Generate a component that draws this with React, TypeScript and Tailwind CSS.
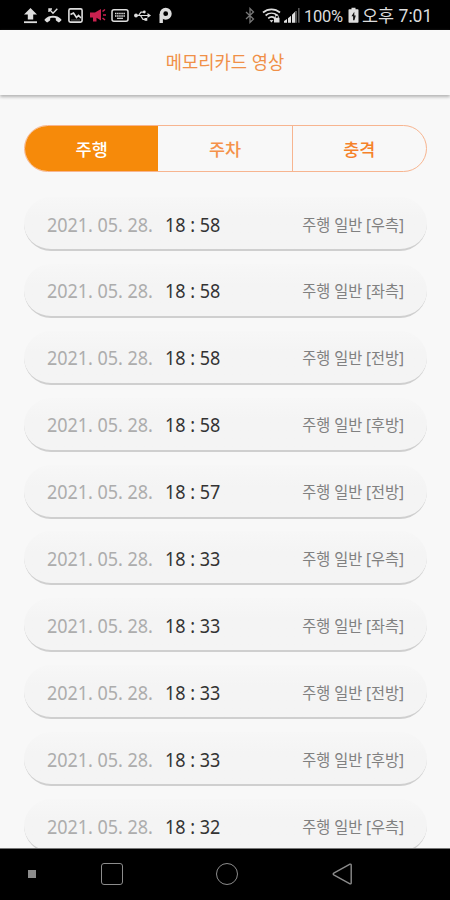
import type { ReactNode } from "react";

interface Clip {
  time: string;
  label: string;
}

const CLIPS: Clip[] = [
  { time: "18 : 58", label: "주행 일반 [우측]" },
  { time: "18 : 58", label: "주행 일반 [좌측]" },
  { time: "18 : 58", label: "주행 일반 [전방]" },
  { time: "18 : 58", label: "주행 일반 [후방]" },
  { time: "18 : 57", label: "주행 일반 [전방]" },
  { time: "18 : 33", label: "주행 일반 [우측]" },
  { time: "18 : 33", label: "주행 일반 [좌측]" },
  { time: "18 : 33", label: "주행 일반 [전방]" },
  { time: "18 : 33", label: "주행 일반 [후방]" },
  { time: "18 : 32", label: "주행 일반 [우측]" },
];

const TABS = ["주행", "주차", "충격"];

function Icon({
  width,
  className = "",
  children,
}: {
  width: number;
  className?: string;
  children: ReactNode;
}) {
  return (
    <svg
      width={width}
      height={18}
      viewBox={`0 0 ${width} 18`}
      fill="none"
      className={`flex-none text-[#dedede] ${className}`}
      aria-hidden="true"
    >
      {children}
    </svg>
  );
}

function StatusBar() {
  return (
    <div className="flex h-[30px] flex-none items-center bg-black pt-0.5 pl-6 text-[#dcdcdc]">
      {/* upload */}
      <Icon width={13}>
        <path d="M6.5 1 13 7.5H9.2V12.5H3.8V7.5H0Z" fill="currentColor" />
        <path d="M0 15.2h13" stroke="currentColor" strokeWidth="1.8" />
      </Icon>
      {/* missed call */}
      <Icon width={18} className="ml-[7px]">
        <path d="M5 5V2h3M5.3 2.3 9 6.3l4.300-4.500" stroke="currentColor" strokeWidth="1.400" />
        <path
          d="M.8 12.200C5 7.600 13 7.600 17.200 12.200c.4.500.4 1 0 1.400l-1.600 1.500c-.5.400-1 .4-1.500 0l-1.800-1.300c-.4-.3-.5-.7-.5-1.200v-1.300c-1.800-.6-3.800-.6-5.600 0v1.300c0 .5-.1.9-.5 1.200l-1.800 1.300c-.5.4-1 .4-1.500 0L.8 13.600c-.4-.4-.4-.9 0-1.400Z"
          fill="currentColor"
        />
      </Icon>
      {/* picture */}
      <Icon width={15} className="ml-1.5">
        <rect x=".9" y="1.900" width="13.200" height="13.200" rx="1.500" stroke="currentColor" strokeWidth="1.600" />
        <path d="m2.500 7.500 3-1.500 3 4.500 2-2 2.500 2.500" stroke="currentColor" strokeWidth="1.600" />
        <path d="M3 13h9" stroke="currentColor" strokeOpacity=".4" />
      </Icon>
      {/* megaphone */}
      <Icon width={17} className="ml-[7px]">
        <g className="text-[#c9214f]">
          <path d="M0 5.500h5L11 2v11.500L6.500 10.800V14.500H3V10.500H0Z" fill="currentColor" />
          <path d="m12.500 4.500 2.500-2M13 8h3M12.500 11l2.500 2" stroke="currentColor" strokeWidth="1.600" />
        </g>
      </Icon>
      {/* keyboard */}
      <Icon width={18} className="ml-1">
        <rect x="1" y="2.700" width="16" height="11.600" rx="2" stroke="currentColor" strokeWidth="1.500" />
        <path d="M4 6.500h10M4 9h10" stroke="currentColor" strokeWidth="1.400" strokeDasharray="1.500 .6" />
        <path d="M6 11.300h6" stroke="currentColor" strokeWidth="1.200" />
      </Icon>
      {/* usb */}
      <Icon width={17} className="ml-[5px]">
        <path d="M2 8.500h12M4.500 8.500 7 5.200h3M6.500 8.500l2.500 3.800h2.500" stroke="currentColor" strokeWidth="1.200" />
        <circle cx="2" cy="8.500" r="1.900" fill="currentColor" />
        <path d="M13.500 6 17 8.500 13.500 11Z" fill="currentColor" />
        <circle cx="10.300" cy="5" r="1.400" fill="currentColor" />
        <path d="M10.500 11h2.800v2.800h-2.800Z" fill="currentColor" />
      </Icon>
      {/* parking app */}
      <Icon width={13} className="ml-2">
        <path d="M2.200 16V7" stroke="currentColor" strokeWidth="3.400" />
        <circle cx="6.700" cy="6.700" r="4.200" stroke="currentColor" strokeWidth="3.600" />
      </Icon>

      {/* bluetooth */}
      <Icon width={10} className="ml-[73px]">
        <path d="m1 5 7.500 7L5 15.500V1.500L8.500 5 1 12" stroke="#777" strokeWidth="1.300" />
      </Icon>
      {/* wifi */}
      <Icon width={19} className="ml-[7px]">
        <path d="M1 5.500c5-4.300 12-4.300 17 0M3.600 8.500c3.500-3 8.300-3 11.800 0M6.200 11.300c2-1.700 4.600-1.700 6.300-.3" stroke="currentColor" strokeWidth="1.700" />
        <path d="m7.500 13.300 2 2.200 2-2.500Z" fill="currentColor" />
        <path d="M12 10.800h5.500v4.700H12Z" fill="currentColor" />
        <path d="M13.300 11V9.500a1.500 1.500 0 0 1 3 0V11" stroke="currentColor" />
      </Icon>
      {/* signal */}
      <Icon width={16} className="ml-[3px]">
        <path d="M0 15.800V14l3-2v3.800ZM4 15.800V11.300l3-2.600v7.100ZM8 15.800V7.800l3-3v11Z" fill="currentColor" />
        <path d="M12 15.800V4" stroke="#aaa" />
        <path d="M14.800 15.800V1" stroke="#555" strokeWidth="1.600" />
      </Icon>
      <span className="ml-1 w-[41px] flex-none pt-0.5 font-['Roboto',sans-serif] text-[16.500px] leading-none tracking-[-0.3px]">
        100%
      </span>
      {/* battery */}
      <Icon width={11} className="ml-[3px]">
        <path d="M3.500.8h4v1.400h2.200q.8 0 .8.8v12q0 .8-.8.8H1.300q-.8 0-.8-.8V3q0-.8.8-.8h2.200Z" fill="currentColor" />
        <path d="M6.300 4.800 3.500 9.300h1.600v3.900h1.300L7.800 8.500H6.300Z" fill="#111" />
      </Icon>
      <span className="ml-[3px] flex-none pt-0.5 font-['Roboto','Noto_Sans_CJK_KR',sans-serif] text-[17.500px] leading-none whitespace-nowrap">
        오후 7:01
      </span>
    </div>
  );
}

function Tabs() {
  return (
    <div className="mr-[23px] ml-6 mt-[30px] flex h-[47px] flex-none overflow-hidden rounded-full border border-[#f7b590]">
      {TABS.map((tab, i) => (
        <button
          key={tab}
          type="button"
          className={`flex-1 pt-px text-[17.500px] font-medium ${
            i === 0
              ? "bg-[#f68a0a] text-white"
              : i === 1
                ? "text-[#f5924a]"
                : "border-l border-l-[#f7b590] text-[#f5822a]"
          }`}
        >
          {tab}
        </button>
      ))}
    </div>
  );
}

function ClipRow({ time, label }: Clip) {
  return (
    <li className="flex h-[54px] flex-none items-center rounded-[27px] border-b-[2.500px] border-[#cfcfcf] bg-linear-to-b from-[#f7f7f7] to-[#f4f4f4] to-40% pt-1 pr-[23px] pl-[23px]">
      <span className="w-[118px] scale-y-[1.07] text-[18px] tracking-[-0.04px] text-[#adadad]">
        2021. 05. 28.
      </span>
      <span className="scale-y-[1.07] text-[18px] text-[#333]">{time}</span>
      <span className="ml-auto scale-y-[1.06] text-[15.200px] text-[#808080]">{label}</span>
    </li>
  );
}

function NavBar() {
  return (
    <nav className="flex h-[52px] flex-none items-center border-t border-[#777] bg-black pb-px pl-7 text-[#8c8c8c]">
      <span className="h-2 w-2 bg-current" />
      <span className="ml-[65px] h-[22px] w-[22px] rounded-[3px] border-[1.500px] border-current" />
      <span className="ml-[93px] h-[22px] w-[22px] rounded-full border-[1.500px] border-current" />
      <svg width="21" height="22" viewBox="0 0 21 22" fill="none" className="ml-[94px]">
        <path
          d="M18 1.200 2.200 9.800q-2 1.200 0 2.400L18 20.800q1.200.4 1.200-1V2.200q0-1.400-1.200-1Z"
          stroke="currentColor"
          strokeWidth="1.400"
        />
      </svg>
    </nav>
  );
}

export default function App() {
  return (
    <div className="flex h-[900px] w-[450px] flex-col overflow-hidden bg-[#f8f8f8] font-['Noto_Sans','Noto_Sans_CJK_KR',sans-serif]">
      <StatusBar />
      <header className="z-10 grid h-[65px] flex-none place-items-center bg-[#f9f9f9] shadow-[0_2px_3px_#b4b4b4]">
        <h1 className="text-[17.700px] leading-none text-[#f09048]">메모리카드 영상</h1>
      </header>
      <main className="flex min-h-0 flex-1 flex-col overflow-hidden">
        <Tabs />
        <ul className="mr-[23px] ml-6 mt-[25px] flex flex-col gap-[12.900px]">
          {CLIPS.map((clip, i) => (
            <ClipRow key={i} {...clip} />
          ))}
        </ul>
      </main>
      <NavBar />
    </div>
  );
}
